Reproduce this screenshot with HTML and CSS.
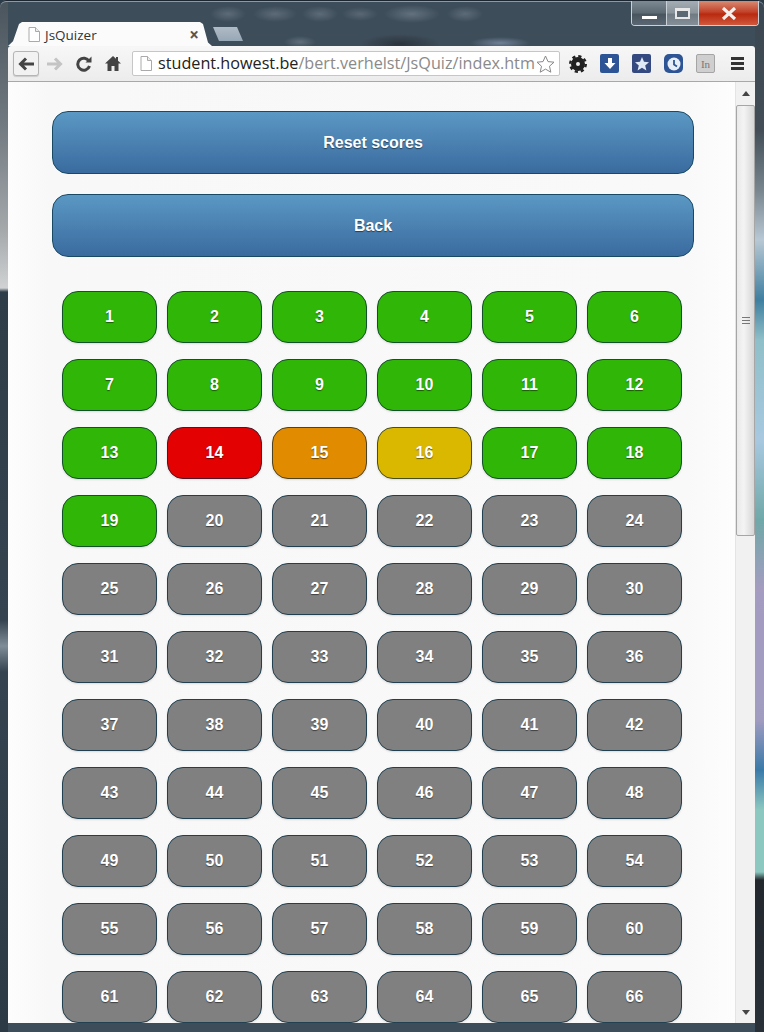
FILE: index.html
```html
<!DOCTYPE html>
<html lang="en">
<head>
    <meta charset="UTF-8">
    <title>JsQuizer</title>
    <link rel="stylesheet" href="styles.css">
</head>
<body>
    <div class="window">
        <!-- Tab strip with caption buttons -->
        <div class="tabstrip">
            <div class="tab">
                <svg class="page-icon" width="12" height="15" viewBox="0 0 12 15"><path d="M1 .5h6.5l4 4v10h-10.500z" fill="#fff" stroke="#aaa"/><path d="M7.500 .5v4h4" fill="#eee" stroke="#aaa"/></svg>
                <span class="tab-title">JsQuizer</span>
                <span class="tab-close">×</span>
            </div>
            <div class="new-tab"></div>
            <div class="caption">
                <div class="cap-btn cap-min"><span></span></div>
                <div class="cap-btn cap-max"><span></span></div>
                <div class="cap-btn cap-close">
                    <svg width="16" height="13" viewBox="0 0 16 13"><path d="M2 1l12 11M14 1L2 12" stroke="#f4f0ee" stroke-width="3.200"/></svg>
                </div>
            </div>
        </div>

        <!-- Toolbar -->
        <div class="toolbar">
            <div class="nav-btn back">
                <svg width="17" height="14" viewBox="0 0 17 14"><path d="M8 1.500L2.500 7 8 12.500M3 7h13" fill="none" stroke="#444" stroke-width="3"/></svg>
            </div>
            <div class="nav-btn">
                <svg width="17" height="14" viewBox="0 0 17 14"><path d="M9 1.500L14.500 7 9 12.500M14 7H1" fill="none" stroke="#c4c4c4" stroke-width="3"/></svg>
            </div>
            <div class="nav-btn">
                <svg width="16" height="16" viewBox="0 0 16 16"><path d="M13 5.200A6 6 0 1 0 13.500 10" fill="none" stroke="#444" stroke-width="3"/><path d="M9.500 6.500h6v-6z" fill="#444"/></svg>
            </div>
            <div class="nav-btn">
                <svg width="16" height="15" viewBox="0 0 16 15"><path d="M8 0L0 7.500h2.500V15h4v-5h3v5h4V7.500H16l-3-2.800V1h-2v1.800z" fill="#444"/></svg>
            </div>
            <div class="omnibox">
                <svg class="page-icon" width="12" height="15" viewBox="0 0 12 15"><path d="M1 .5h6.500l4 4v10h-10.500z" fill="#fff" stroke="#aaa"/><path d="M7.500 .5v4h4" fill="#eee" stroke="#aaa"/></svg>
                <div class="url"><span class="host">student.howest.be</span><span class="path">/bert.verhelst/JsQuiz/index.htm</span></div>
                <svg class="star" width="19" height="18" viewBox="0 0 19 18"><path d="M9.500 1l2.500 5.600 6 .6-4.500 4 1.300 6-5.300-3.100-5.300 3.100 1.300-6-4.500-4 6-.6z" fill="#fff" stroke="#888"/></svg>
            </div>
            <div class="extensions">
                <svg width="18" height="18" viewBox="0 0 18 18"><circle cx="9" cy="9" r="4.500" fill="none" stroke="#222" stroke-width="5"/><circle cx="9" cy="9" r="7.800" fill="none" stroke="#222" stroke-width="2.400" stroke-dasharray="3.200 2.930"/></svg>
                <div class="ext ext-blue">
                    <svg width="12" height="12" viewBox="0 0 12 12"><path d="M4 0h4v5h3.500L6 11 .5 5H4z" fill="#fff"/></svg>
                </div>
                <div class="ext ext-navy">
                    <svg width="14" height="14" viewBox="0 0 14 14"><path d="M7 0l2 4.800 5 .4-3.800 3.300 1.200 5L7 10.800l-4.400 2.700 1.200-5L0 5.200l5-.4z" fill="#dfe8f5"/></svg>
                </div>
                <div class="ext ext-blue ext-round">
                    <svg width="14" height="14" viewBox="0 0 14 14"><circle cx="7" cy="7" r="6.500" fill="#e8eef8"/><path d="M7 3v4.500l3 2" fill="none" stroke="#2d5596" stroke-width="1.800"/></svg>
                </div>
                <div class="ext ext-grey">In</div>
                <div class="menu"><span></span><span></span><span></span></div>
            </div>
        </div>

        <!-- Viewport -->
        <div class="viewport">
            <div class="page">
                <a class="wide-btn">Reset scores</a>
                <a class="wide-btn">Back</a>
                <div class="questions">
                    <a class="tile green">1</a><a class="tile green">2</a><a class="tile green">3</a><a class="tile green">4</a><a class="tile green">5</a><a class="tile green">6</a>
                    <a class="tile green">7</a><a class="tile green">8</a><a class="tile green">9</a><a class="tile green">10</a><a class="tile green">11</a><a class="tile green">12</a>
                    <a class="tile green">13</a><a class="tile red">14</a><a class="tile orange">15</a><a class="tile yellow">16</a><a class="tile green">17</a><a class="tile green">18</a>
                    <a class="tile green">19</a><a class="tile">20</a><a class="tile">21</a><a class="tile">22</a><a class="tile">23</a><a class="tile">24</a>
                    <a class="tile">25</a><a class="tile">26</a><a class="tile">27</a><a class="tile">28</a><a class="tile">29</a><a class="tile">30</a>
                    <a class="tile">31</a><a class="tile">32</a><a class="tile">33</a><a class="tile">34</a><a class="tile">35</a><a class="tile">36</a>
                    <a class="tile">37</a><a class="tile">38</a><a class="tile">39</a><a class="tile">40</a><a class="tile">41</a><a class="tile">42</a>
                    <a class="tile">43</a><a class="tile">44</a><a class="tile">45</a><a class="tile">46</a><a class="tile">47</a><a class="tile">48</a>
                    <a class="tile">49</a><a class="tile">50</a><a class="tile">51</a><a class="tile">52</a><a class="tile">53</a><a class="tile">54</a>
                    <a class="tile">55</a><a class="tile">56</a><a class="tile">57</a><a class="tile">58</a><a class="tile">59</a><a class="tile">60</a>
                    <a class="tile">61</a><a class="tile">62</a><a class="tile">63</a><a class="tile">64</a><a class="tile">65</a><a class="tile">66</a>
                </div>
            </div>
            <div class="scrollbar">
                <div class="arrow-up"></div>
                <div class="thumb"><div class="grip"><span></span><span></span><span></span></div></div>
                <div class="arrow-down"></div>
            </div>
        </div>
    </div>
</body>
</html>
```

FILE: styles.css
```css
html, body {
    margin: 0;
    height: 100%;
    overflow: hidden;
}
body {
    background: #2b3a47;
}
.window {
    box-sizing: border-box;
    height: 1032px;
    padding: 0 9px 9px 8px;
    display: flex;
    flex-direction: column;
    border-radius: 6px 6px 0 0;
    box-shadow: inset 0 1px 0 #1c2630, inset 0 2px 0 #8a9aa6;
    /* blurred desktop showing through the glass frame */
    background-color: #3e4d5a;
    background-image:
        linear-gradient(180deg, #4a545c 0, #6f787f 120px, #a4a8ab 230px, #d0d2d3 288px, #2f3d48 292px, #34434f 620px, #7f8d98 646px, #34434f 672px, #2c3a45 1032px),
        linear-gradient(180deg, #3a4650 0, #424d57 130px, #78858f 190px, #b8c8d4 240px, #3f7fa0 300px, #8fbfc8 340px, #a8c8e0 440px, #70a8a8 520px, #a59cc0 590px, #a09cc0 720px, #3a7aa8 770px, #8cc8c0 810px, #8cc8c0 872px, #22282e 880px, #2a3038 1032px),
        radial-gradient(ellipse 18px 8px at 228px 14px, #5c6b77, transparent),
        radial-gradient(ellipse 22px 8px at 275px 14px, #5c6b77, transparent),
        radial-gradient(ellipse 18px 8px at 320px 14px, #5c6b77, transparent),
        radial-gradient(ellipse 18px 7px at 360px 14px, #586773, transparent),
        radial-gradient(ellipse 28px 9px at 412px 14px, #62717d, transparent),
        radial-gradient(ellipse 18px 8px at 465px 14px, #5c6b77, transparent),
        radial-gradient(ellipse 30px 6px at 500px 43px, #6f7f96, transparent),
        radial-gradient(ellipse 16px 6px at 300px 42px, #5f6e7a, transparent),
        radial-gradient(ellipse 40px 10px at 400px 44px, #2a333c, transparent);
    background-repeat: no-repeat;
    background-size: 8px 100%, 9px 100%, auto, auto, auto, auto, auto, auto, auto, auto, auto;
    background-position: left top, right top, 0 0, 0 0, 0 0, 0 0, 0 0, 0 0, 0 0, 0 0, 0 0;
}
.tabstrip {
    height: 46px;
    flex: none;
    display: flex;
    align-items: flex-end;
}
.tab {
    box-sizing: border-box;
    width: 204px;
    height: 24px;
    padding: 1px 13px 0 20px;
    display: flex;
    align-items: center;
    background: #fbfbfb;
    clip-path: polygon(0 100%, 5px 80%, 11px 8%, 14px 0, 192px 0, 195px 8%, 200px 85%, 204px 100%);
    font-family: "Open Sans", sans-serif;
    font-size: 13.500px;
    color: #333;
}
.tab-title {
    margin-left: 5px;
    flex: 1;
}
.tab-close {
    font-size: 17px;
    font-weight: bold;
    color: #555;
}
.new-tab {
    width: 30px;
    height: 14px;
    margin: 0 0 5px 1px;
    background: linear-gradient(180deg, #b0bcc6, #97a7b5);
    clip-path: polygon(0 0, 24px 0, 30px 100%, 6px 100%);
}
.caption {
    margin-left: auto;
    margin-right: -4px;
    align-self: flex-start;
    height: 24px;
    margin-top: 1px;
    display: flex;
    border: 1px solid #c9d2d8;
    border-top: 0;
    border-radius: 0 0 4px 4px;
    overflow: hidden;
}
.cap-btn {
    display: flex;
    align-items: center;
    justify-content: center;
    border-left: 1px solid #c9d2d8;
    background: linear-gradient(180deg, #7e8a93 0, #5c6872 50%, #48545e 55%, #5b6873 100%);
}
.cap-min {
    width: 34px;
    border-left: 0;
}
.cap-min span {
    width: 15px;
    height: 3px;
    margin-top: 8px;
    background: #fff;
}
.cap-max {
    width: 31px;
    background: linear-gradient(180deg, #a5adb3 0, #8b949b 50%, #6f7a83 55%, #858f97 100%);
}
.cap-max span {
    box-sizing: border-box;
    width: 15px;
    height: 11px;
    border: 2px solid #e8e8e8;
    border-top-width: 3px;
    background: #5c6872;
}
.cap-close {
    width: 59px;
    background: linear-gradient(180deg, #d98a72 0, #c2432a 45%, #b92a10 55%, #d0583c 100%);
}
.toolbar {
    box-sizing: border-box;
    height: 36px;
    flex: none;
    padding: 5px;
    display: flex;
    align-items: center;
    background: linear-gradient(180deg, #f7f7f7, #ececec);
    border-bottom: 1px solid #a8a8a8;
    border-radius: 3px 3px 0 0;
}
.nav-btn {
    box-sizing: border-box;
    width: 29px;
    height: 25px;
    display: flex;
    align-items: center;
    justify-content: center;
    flex: none;
}
.back {
    width: 26px;
    margin-right: 1px;
    background: #f2f2f2;
    border: 1px solid #b5b5b5;
    border-radius: 3px;
    box-shadow: 0 1px 1px rgba(0, 0, 0, 0.15);
}
.omnibox {
    box-sizing: border-box;
    width: 428px;
    height: 25px;
    margin-left: 5px;
    padding: 0 4px 0 7px;
    display: flex;
    align-items: center;
    background: #fff;
    border: 1px solid #c6c6c6;
    border-radius: 2px;
    flex: none;
}
.url {
    flex: 1;
    margin-left: 6px;
    min-width: 0;
    white-space: nowrap;
    font-family: "Open Sans", sans-serif;
    font-size: 16.200px;
    line-height: 23px;
    color: #8a8a8a;
}
.host {
    color: #222;
}
.star {
    flex: none;
}
.extensions {
    flex: 1;
    display: flex;
    align-items: center;
    gap: 13px;
    padding-left: 9px;
}
.ext {
    box-sizing: border-box;
    width: 19px;
    height: 19px;
    display: flex;
    align-items: center;
    justify-content: center;
    border-radius: 2px;
}
.ext-blue {
    background: #2d5596;
}
.ext-navy {
    background: #34497f;
}
.ext-round {
    border-radius: 5px;
}
.ext-grey {
    background: #cfcfcf;
    border: 1px solid #a5a5a5;
    font-family: "Liberation Serif", serif;
    font-size: 11px;
    color: #777;
}
.menu {
    margin-left: 3px;
    display: flex;
    flex-direction: column;
    gap: 2px;
}
.menu span {
    width: 13px;
    height: 3px;
    background: #333;
}
.viewport {
    flex: 1;
    min-height: 0;
    display: flex;
    background: #f9f9f9;
}
.page {
    flex: 1;
    min-width: 0;
    overflow: hidden;
    padding: 29px 41px 0 44px;
    font-family: "Liberation Sans", Arial, sans-serif;
    background: linear-gradient(90deg, #fdfdfd, #f8f8f8 40px, #f9f9f9 680px, #fdfdfd);
}
.wide-btn {
    box-sizing: border-box;
    height: 63px;
    margin-bottom: 20px;
    display: flex;
    align-items: center;
    justify-content: center;
    background: linear-gradient(180deg, #5b98c4, #3a6b9f);
    border: 1px solid #184a66;
    border-radius: 16px;
    color: #fff;
    font-size: 16px;
    font-weight: bold;
    text-shadow: 0 1px 1px rgba(0, 0, 0, 0.5);
}
.questions {
    margin: 34px 0 0 10px;
    display: grid;
    grid-template-columns: repeat(6, 95px);
    grid-auto-rows: 52px;
    gap: 16px 10px;
}
.tile {
    display: flex;
    align-items: center;
    justify-content: center;
    background: #808080;
    border: 1px solid #22404f;
    border-radius: 16px;
    color: #fff;
    font-size: 16px;
    font-weight: bold;
    text-shadow: 0 1px 1px rgba(0, 0, 0, 0.5);
    box-shadow: 0 1px 2px rgba(0, 0, 0, 0.12);
}
.green {
    background: #2fb606;
    border-color: #13512a;
}
.red {
    background: #e30101;
    border-color: #4f1626;
}
.orange {
    background: #e08b00;
    border-color: #4f4220;
}
.yellow {
    background: #dbb800;
    border-color: #454f20;
}
.scrollbar {
    box-sizing: border-box;
    width: 20px;
    flex: none;
    display: flex;
    flex-direction: column;
    align-items: center;
    background: #f1f1f1;
    border-left: 1px solid #e4e4e4;
}
.arrow-up, .arrow-down {
    width: 0;
    height: 0;
    border-left: 4px solid transparent;
    border-right: 4px solid transparent;
}
.arrow-up {
    margin: 9px 0;
    border-bottom: 5px solid #444;
}
.arrow-down {
    margin: auto 0 8px;
    border-top: 5px solid #444;
}
.thumb {
    box-sizing: border-box;
    width: 19px;
    height: 431px;
    display: flex;
    align-items: center;
    justify-content: center;
    background: linear-gradient(90deg, #e9e9e9, #f4f4f4 40%, #d6d6d6);
    border: 1px solid #a6a6a6;
    border-radius: 2px;
}
.grip {
    display: flex;
    flex-direction: column;
    gap: 2px;
}
.grip span {
    width: 8px;
    height: 1px;
    background: #777;
}
```
